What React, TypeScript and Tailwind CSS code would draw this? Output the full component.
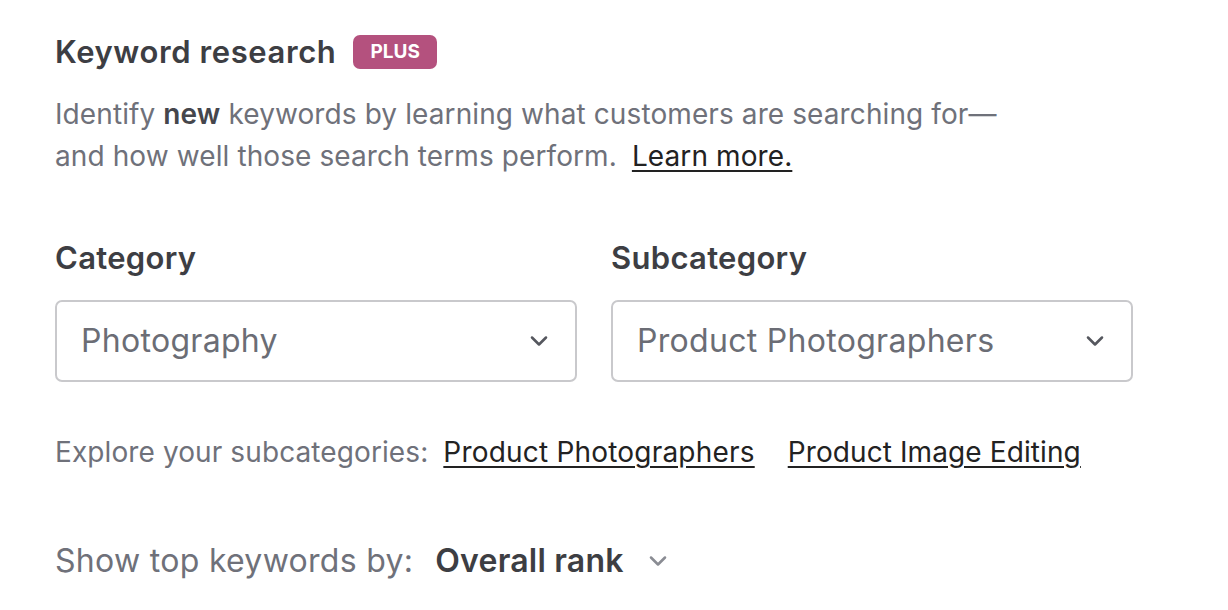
import React from "react";

const Chevron = ({ className }: { className?: string }) => (
  <svg viewBox="0 0 24 24" className={className} fill="none" stroke="currentColor" strokeWidth="2.2" strokeLinecap="round" strokeLinejoin="round">
    <path d="M6 9l6 6 6-6" />
  </svg>
);

const SelectBox = ({ value }: { value: string }) => (
  <div className="flex h-[82px] w-[522px] items-center justify-between rounded-[7px] border-2 border-[#c9c9cc] pl-[24px] pr-[22px]">
    <span className="text-[32px] tracking-[0.3px] text-[#6b6d75]">{value}</span>
    <Chevron className="h-[28px] w-[28px] text-[#55575e]" />
  </div>
);

const App = () => {
  return (
    <div className="h-[610px] w-[1228px] bg-white pl-[55px] pt-[30px] font-['Inter',sans-serif] text-[#3d3e43]">
      <div className="flex items-center gap-[17px]">
        <h1 className="text-[31px] font-semibold leading-[44px] tracking-[0.6px]">Keyword research</h1>
        <span className="flex h-[34px] items-center rounded-[7px] bg-[#b4517e] px-[17px] text-[19px] font-bold text-white">PLUS</span>
      </div>

      <p className="mt-[19px] w-[1000px] text-[28px] leading-[42px] tracking-[0.1px] text-[#6f717a]">
        Identify <b className="font-semibold text-[#45464c]">new</b> keywords by learning what customers are searching for—
        <br />
        and how well those search terms perform.{" "}
        <a className="ml-[7px] text-[#222] underline underline-offset-4">Learn more.</a>
      </p>

      <div className="mt-[59px] flex gap-[34px]">
        <div>
          <div className="text-[31px] font-semibold leading-[44px] tracking-[0.3px]">Category</div>
          <div className="mt-[20px]">
            <SelectBox value="Photography" />
          </div>
        </div>
        <div>
          <div className="text-[31px] font-semibold leading-[44px] tracking-[0.3px]">Subcategory</div>
          <div className="mt-[20px]">
            <SelectBox value="Product Photographers" />
          </div>
        </div>
      </div>

      <div className="mt-[52px] flex items-center text-[28px] leading-[36px] tracking-[0.1px]">
        <span className="text-[#6f717a]">Explore your subcategories:</span>
        <a className="ml-[15px] tracking-[0.2px] text-[#222] underline underline-offset-4">Product Photographers</a>
        <a className="ml-[33px] tracking-[0.1px] text-[#222] underline underline-offset-4">Product Image Editing</a>
      </div>

      <div className="mt-[67px] flex items-center">
        <span className="text-[32px] tracking-[0.3px] text-[#6f717a]">Show top keywords by:</span>
        <span className="ml-[22px] text-[32px] font-semibold tracking-[0.2px]">Overall rank</span>
        <Chevron className="ml-[20px] h-[28px] w-[28px] text-[#8a8c93]" />
      </div>
    </div>
  );
};

export default App;
